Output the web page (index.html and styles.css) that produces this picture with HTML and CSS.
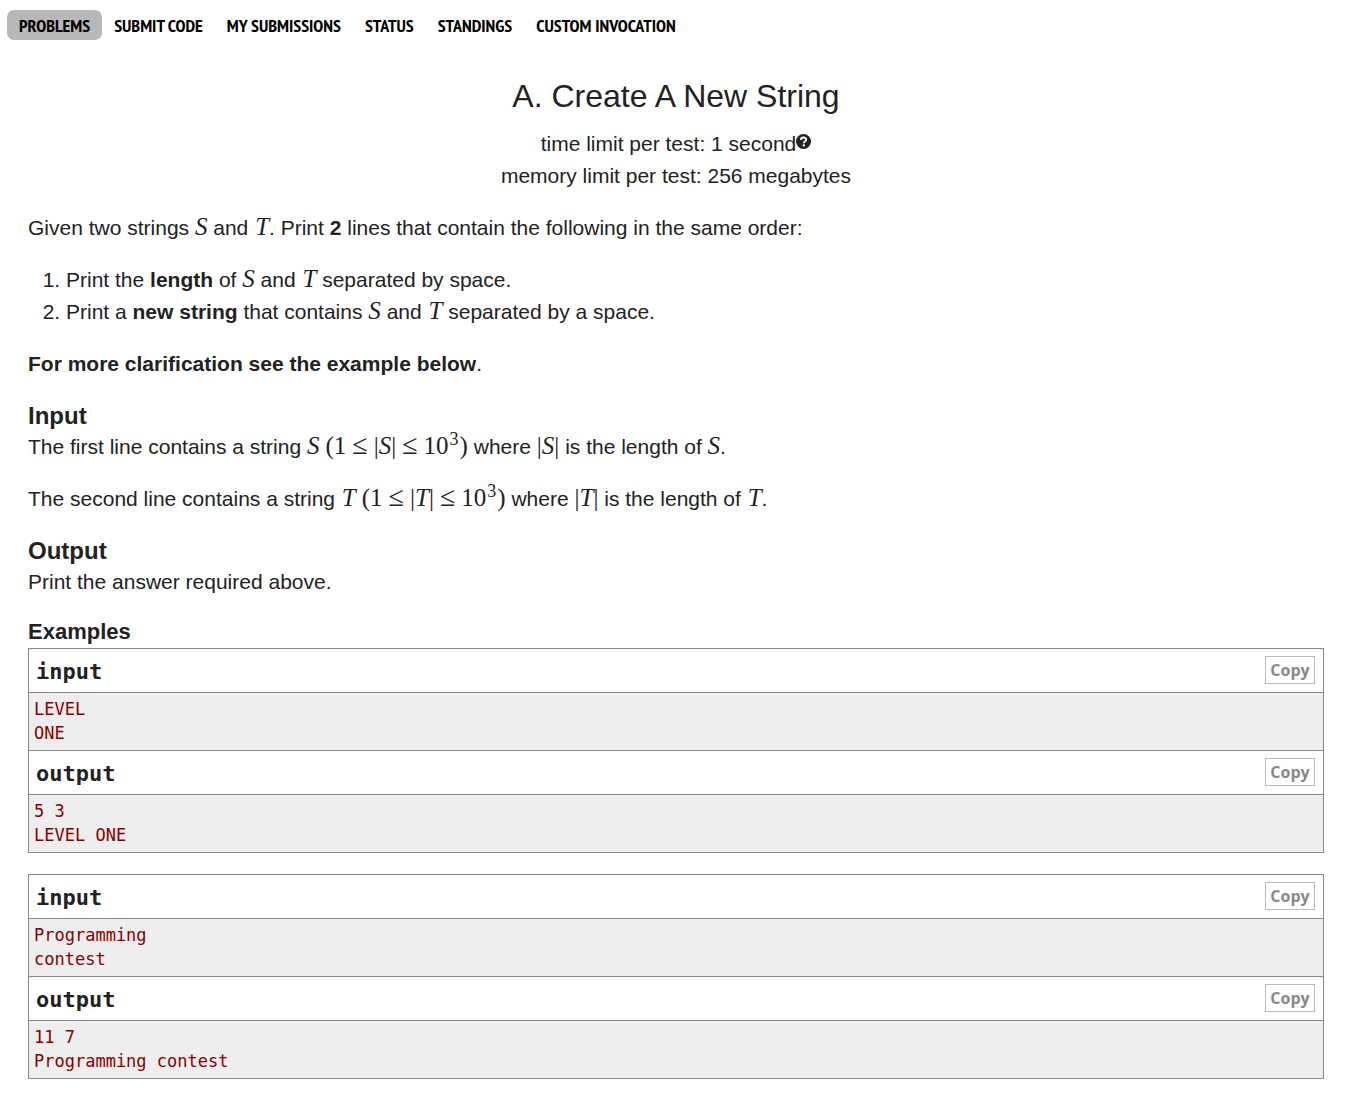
FILE: index.html
```html
<!DOCTYPE html>
<html lang="en">
<head>
<meta charset="utf-8">
<title>A. Create A New String</title>
<link rel="stylesheet" href="styles.css">
</head>
<body>
<nav class="menu">
  <a class="menu-item current" href="#">PROBLEMS</a>
  <a class="menu-item" href="#">SUBMIT CODE</a>
  <a class="menu-item" href="#">MY SUBMISSIONS</a>
  <a class="menu-item" href="#">STATUS</a>
  <a class="menu-item" href="#">STANDINGS</a>
  <a class="menu-item" href="#">CUSTOM INVOCATION</a>
</nav>
<main class="problem">
  <header class="problem-header">
    <h1 class="title">A. Create A New String</h1>
    <div>time limit per test: 1 second<svg class="help" viewBox="0 0 16 16" aria-hidden="true"><circle cx="8" cy="8" r="8" fill="#222"/><path d="M5.3 6.3C5.3 2.9 10.8 3 10.8 6.1C10.8 8 8.3 8 8.3 9.9" fill="none" stroke="#fff" stroke-width="2.2"/><path d="M7.2 11h2.3v2.2H7.2z" fill="#fff"/></svg></div>
    <div>memory limit per test: 256 megabytes</div>
  </header>
  <p>Given two strings <i class="math">S</i> and <i class="math wide">T</i>. Print <b>2</b> lines that contain the following in the same order:</p>
  <ol class="steps">
    <li>Print the <b>length</b> of <i class="math">S</i> and <i class="math wide">T</i> separated by space.</li>
    <li>Print a <b>new string</b> that contains <i class="math">S</i> and <i class="math wide">T</i> separated by a space.</li>
  </ol>
  <p><b>For more clarification see the example below</b>.</p>
  <section>
    <h2 class="section-title">Input</h2>
    <p>The first line contains a string <span class="math"><i>S</i><span class="open">(</span>1<span class="rel">≤</span>|<i>S</i>|<span class="rel">≤</span>10<sup>3</sup>)</span> where <span class="math">|<i>S</i>|</span> is the length of <i class="math">S</i>.</p>
    <p>The second line contains a string <span class="math"><i class="wide">T</i><span class="open">(</span>1<span class="rel">≤</span>|<i>T</i>|<span class="rel">≤</span>10<sup>3</sup>)</span> where <span class="math">|<i>T</i>|</span> is the length of <i class="math wide">T</i>.</p>
  </section>
  <section>
    <h2 class="section-title">Output</h2>
    <p>Print the answer required above.</p>
  </section>
  <section>
    <h2 class="examples-title">Examples</h2>
    <div class="sample">
      <div class="sample-head"><h3>input</h3><button class="copy" type="button">Copy</button></div>
      <pre>LEVEL
ONE</pre>
      <div class="sample-head"><h3>output</h3><button class="copy" type="button">Copy</button></div>
      <pre>5 3
LEVEL ONE</pre>
    </div>
    <div class="sample">
      <div class="sample-head"><h3>input</h3><button class="copy" type="button">Copy</button></div>
      <pre>Programming
contest</pre>
      <div class="sample-head"><h3>output</h3><button class="copy" type="button">Copy</button></div>
      <pre>11 7
Programming contest</pre>
    </div>
  </section>
</main>
</body>
</html>
```
FILE: styles.css
```css
* { box-sizing: border-box; }
body {
  margin: 0;
  background: #fff;
  color: #222;
  font: 21px/32px "Liberation Sans", Arial, sans-serif;
}
h1, h2, h3, p, pre, ol { margin: 0; }

.menu {
  display: flex;
  flex-wrap: wrap;
  padding: 10px 7px 0;
}
.menu-item {
  padding: 2px 12px 0;
  border-radius: 7px;
  color: #000;
  font: bold 18px/28px "PT Sans Narrow", "Liberation Sans Narrow", "Arial Narrow", sans-serif;
  text-decoration: none;
}
.menu-item.current { background: #b8b8b8; }

.problem { padding: 36px 24px 20px 28px; }
.problem-header {
  margin-bottom: 20px;
  text-align: center;
}
.title {
  margin-bottom: 12px;
  font-size: 32px;
  font-weight: normal;
  line-height: 40px;
}
.help {
  width: 15px;
  height: 15px;
  vertical-align: 2px;
}
.problem p, .steps { margin-bottom: 20px; }
.steps { padding-left: 38px; }

.math {
  font-family: "Liberation Serif", "Times New Roman", serif;
  font-size: 25px;
  line-height: 1px;
}
.wide { padding: 0 0 0 1px; }
.math sup {
  margin: 0 1px;
  font-size: 18px;
  line-height: 1px;
  vertical-align: 9px;
}
.open { margin-left: 6px; }
.rel {
  margin: 0 6px;
  font-size: 28px;
}

.section-title {
  font-size: 24px;
  line-height: 31px;
}
.examples-title {
  margin-bottom: 2px;
  font-size: 22px;
  line-height: 28px;
}

.sample {
  margin-bottom: 21px;
  border: 1px solid #888;
  border-bottom: 0;
}
.sample-head {
  display: flex;
  align-items: flex-start;
  justify-content: space-between;
  padding: 7px 8px 7px 7px;
  border-bottom: 1px solid #888;
}
.sample-head h3 {
  padding-top: 3px;
  font: bold 22px/26px "DejaVu Sans Mono", monospace;
}
.copy {
  min-width: 50px;
  height: 28px;
  padding: 0 4px;
  border: 1px solid #bbb;
  background: #fff;
  color: #888;
  font: bold 16px/26px "Open Sans", sans-serif;
}
.sample pre {
  padding: 4px 5px 5px;
  border-bottom: 1px solid #888;
  background: #eee;
  color: #880000;
  font: 17px/24px "DejaVu Sans Mono", monospace;
}
```
